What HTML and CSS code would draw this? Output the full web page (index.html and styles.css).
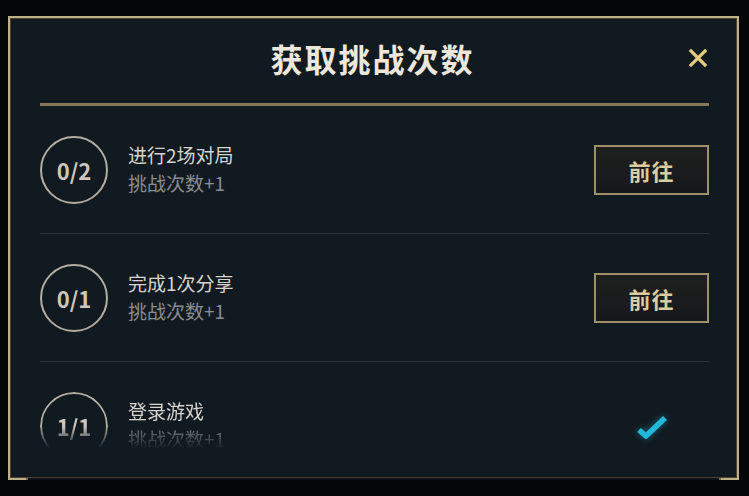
FILE: index.html
```html
<!DOCTYPE html>
<html lang="zh-CN">
  <head>
    <meta charset="UTF-8" />
    <meta name="viewport" content="width=device-width, initial-scale=1.0" />
    <title>获取挑战次数</title>
    <link rel="stylesheet" href="styles.css">
  </head>
  <body>
    <div class="dialog">
      <div class="dialog-header">
        <span></span>
        <h2 class="dialog-title">获取挑战次数</h2>
        <button class="close-btn" aria-label="关闭">
          <svg width="20" height="20" viewBox="0 0 20 20">
            <path d="M3 3 L17 17 M17 3 L3 17" stroke="#e3cd7c" stroke-width="3.2" stroke-linecap="square" />
          </svg>
        </button>
      </div>
      <div class="task-list">
        <div class="task">
          <div class="progress">0/2</div>
          <div class="task-text">
            <p class="task-name">进行2场对局</p>
            <p class="task-reward">挑战次数+1</p>
          </div>
          <div class="task-action">
            <button class="go-btn">前往</button>
          </div>
        </div>
        <div class="task">
          <div class="progress">0/1</div>
          <div class="task-text">
            <p class="task-name">完成1次分享</p>
            <p class="task-reward">挑战次数+1</p>
          </div>
          <div class="task-action">
            <button class="go-btn">前往</button>
          </div>
        </div>
        <div class="task task--cut">
          <div class="progress">1/1</div>
          <div class="task-text">
            <p class="task-name">登录游戏</p>
            <p class="task-reward">挑战次数+1</p>
          </div>
          <div class="task-action">
            <svg class="check" width="32" height="26" viewBox="0 0 32 26">
              <path d="M3 17 L10 23 L29 5" fill="none" stroke="#22b8da" stroke-width="5.5" stroke-linejoin="miter" />
            </svg>
          </div>
        </div>
      </div>
    </div>
  </body>
</html>
```

FILE: styles.css
```css
body {
  margin: 0;
  background: #050607;
  font-family: "Noto Sans CJK SC", "Noto Sans", sans-serif;
}
.dialog {
  position: relative;
  box-sizing: border-box;
  width: 731px;
  height: 464px;
  margin: 16px 0 0 8px;
  border: 2px solid #c0b088;
  box-shadow: inset 0 0 0 1px #4b4331;
  background: #121a21;
}
.dialog::after {
  content: "";
  position: absolute;
  left: 16px;
  right: 16px;
  bottom: -9px;
  height: 7px;
  border: 2px solid #7c6d4a;
  border-top: none;
  background: #0d1318;
}
.dialog-header {
  display: grid;
  grid-template-columns: 1fr auto 1fr;
  align-items: center;
  margin: 0 28px 0 30px;
  border-bottom: 3px solid #85775a;
  box-sizing: border-box;
  height: 88px;
}
.dialog-title {
  margin: 0;
  padding-bottom: 6px;
  padding-right: 4px;
  font-size: 32px;
  font-weight: 700;
  color: #ece7da;
  letter-spacing: 2px;
}
.close-btn {
  justify-self: end;
  width: 22px;
  height: 22px;
  padding: 0;
  margin-bottom: 6px;
  border: none;
  background: none;
  display: flex;
  align-items: center;
  justify-content: center;
}
.task-list {
  margin: 0 28px 0 30px;
  height: 370px;
  overflow: hidden;
}
.task {
  display: flex;
  align-items: center;
  height: 127px;
  border-bottom: 1px solid #2a333b;
}
.progress {
  width: 68px;
  height: 68px;
  box-sizing: border-box;
  border: 2px solid #b3ada2;
  border-radius: 50%;
  display: flex;
  align-items: center;
  justify-content: center;
  font-size: 22px;
  font-weight: 700;
  color: #cbc7bf;
  flex-shrink: 0;
}
.task-text {
  flex: 1;
  margin-left: 20px;
  padding-bottom: 2px;
}
.task-text p {
  margin: 0;
  font-size: 19px;
  line-height: 28px;
}
.task-name {
  color: #d6d4cf;
}
.task-reward {
  color: #8a8d90;
}
/* last row runs under the bottom edge of the scroll area */
.task--cut .progress {
  -webkit-mask-image: linear-gradient(to bottom, #000 34px, transparent 56px);
  mask-image: linear-gradient(to bottom, #000 34px, transparent 56px);
}
.task--cut .task-text {
  -webkit-mask-image: linear-gradient(to bottom, #000 28px, transparent 52px);
  mask-image: linear-gradient(to bottom, #000 28px, transparent 52px);
}
.task-action {
  width: 115px;
  display: flex;
  justify-content: center;
}
.go-btn {
  width: 115px;
  height: 50px;
  border: 2px solid #a09068;
  background: linear-gradient(#1e1f1e, #16191b);
  color: #dccb9e;
  font-family: inherit;
  font-size: 22px;
  font-weight: 700;
  letter-spacing: 1px;
  padding: 0;
}
.check {
  filter: drop-shadow(0 0 3px rgba(31, 179, 213, 0.5));
}
```
